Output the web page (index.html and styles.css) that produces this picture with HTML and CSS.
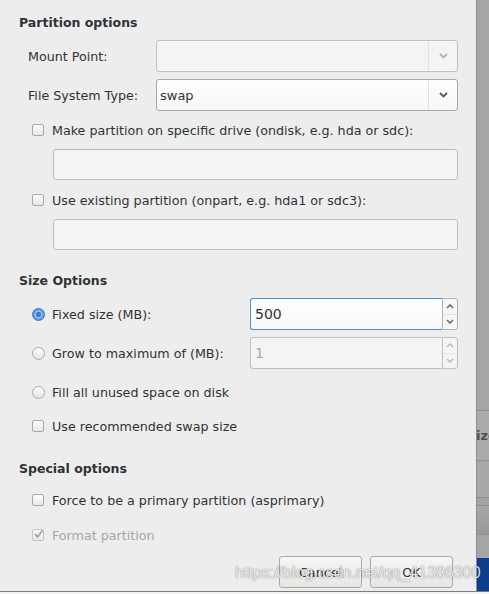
FILE: index.html
```html
<!DOCTYPE html>
<html>
<head>
<meta charset="utf-8">
<link rel="stylesheet" href="styles.css">
</head>
<body>
<div class="screen">
  <div class="main">
    <div class="dialog">
      <div class="heading h1">Partition options</div>

      <div class="form-row r-mount">
        <span class="label">Mount Point:</span>
        <div class="combo insensitive">
          <span class="combo-text"></span>
          <span class="combo-btn"><svg width="9" height="6" viewBox="0 0 9 6"><polyline points="1,1 4.5,4.5 8,1" fill="none" stroke="#b3b3b3" stroke-width="1.8"/></svg></span>
        </div>
      </div>

      <div class="form-row r-fs">
        <span class="label">File System Type:</span>
        <div class="combo active">
          <span class="combo-text">swap</span>
          <span class="combo-btn"><svg width="9" height="6" viewBox="0 0 9 6"><polyline points="1,1 4.5,4.5 8,1" fill="none" stroke="#555753" stroke-width="1.8"/></svg></span>
        </div>
      </div>

      <div class="check-row r-c1"><span class="check"></span><span>Make partition on specific drive (ondisk, e.g. hda or sdc):</span></div>
      <div class="entry r-e1"></div>

      <div class="check-row r-c2"><span class="check"></span><span>Use existing partition (onpart, e.g. hda1 or sdc3):</span></div>
      <div class="entry r-e2"></div>

      <div class="heading h2">Size Options</div>

      <div class="spin-row r-fixed">
        <div class="opt"><span class="radio on"></span><span>Fixed size (MB):</span></div>
        <div class="spin focus">
          <span class="spin-entry">500</span>
          <span class="spin-btns">
            <span class="sb"><svg width="8" height="5" viewBox="0 0 8 5"><polyline points="1,4 4,1 7,4" fill="none" stroke="#6a6a6a" stroke-width="1.6"/></svg></span>
            <span class="sb"><svg width="8" height="5" viewBox="0 0 8 5"><polyline points="1,1 4,4 7,1" fill="none" stroke="#6a6a6a" stroke-width="1.6"/></svg></span>
          </span>
        </div>
      </div>

      <div class="spin-row r-grow">
        <div class="opt"><span class="radio"></span><span>Grow to maximum of (MB):</span></div>
        <div class="spin disabled">
          <span class="spin-entry">1</span>
          <span class="spin-btns">
            <span class="sb"><svg width="8" height="5" viewBox="0 0 8 5"><polyline points="1,4 4,1 7,4" fill="none" stroke="#bdbdbd" stroke-width="1.6"/></svg></span>
            <span class="sb"><svg width="8" height="5" viewBox="0 0 8 5"><polyline points="1,1 4,4 7,1" fill="none" stroke="#bdbdbd" stroke-width="1.6"/></svg></span>
          </span>
        </div>
      </div>

      <div class="check-row r-fill"><span class="radio"></span><span>Fill all unused space on disk</span></div>
      <div class="check-row r-rec"><span class="check"></span><span>Use recommended swap size</span></div>

      <div class="heading h3">Special options</div>

      <div class="check-row r-force"><span class="check"></span><span>Force to be a primary partition (asprimary)</span></div>
      <div class="check-row r-format dis"><span class="check checked"><svg width="11" height="10" viewBox="0 0 11 10"><polyline points="2,5 4.5,8 9.5,1.5" fill="none" stroke="#a8a8a8" stroke-width="2"/></svg></span><span>Format partition</span></div>

      <div class="buttons">
        <div class="btn">Cancel</div>
        <div class="btn">OK</div>
      </div>
    </div>
    <div class="strip">
      <div class="s-top"></div>
      <div class="s-tab"><span>ize</span></div>
      <div class="s-a"></div>
      <div class="s-b"></div>
      <div class="s-c"></div>
      <div class="s-d"></div>
      <div class="s-blue"></div>
    </div>
  </div>
  <div class="bottom-line"></div>
  <div class="bottom-fill"></div>
  <div class="watermark">https://blog.csdn.net/qq_41386300</div>
</div>
</body>
</html>
```

FILE: styles.css
```css
html, body {
  margin: 0;
  padding: 0;
}
body {
  font-family: "DejaVu Sans", "Noto Sans", sans-serif;
  font-size: 12.7px;
  color: #2e3436;
  background: #ededed;
}
.screen {
  position: relative;
  width: 489px;
  height: 594px;
  overflow: hidden;
}
.main {
  display: flex;
  height: 591px;
}
.dialog {
  box-sizing: border-box;
  width: 477px;
  height: 591px;
  background: #ededed;
  border-right: 1px solid #8c8c8c;
  padding-top: 15px;
  display: flex;
  flex-direction: column;
}
.heading {
  margin-left: 19px;
  font-weight: bold;
  font-size: 12.5px;
  height: 16px;
  line-height: 16px;
}
.form-row {
  display: flex;
  align-items: center;
  margin-left: 28px;
  height: 32px;
}
.label {
  width: 128px;
}
.combo {
  box-sizing: border-box;
  width: 302px;
  height: 32px;
  border: 1px solid #b4b4b1;
  border-radius: 3px;
  display: flex;
  align-items: stretch;
}
.combo.insensitive {
  background: #f4f4f2;
  border-color: #c0c0bd;
}
.combo.active {
  background: linear-gradient(#ffffff, #f6f6f5);
  border-color: #a8a8a5;
}
.combo-text {
  flex: 1;
  padding-left: 3px;
  display: flex;
  align-items: center;
  font-size: 13px;
}
.combo-btn {
  width: 28px;
  border-left: 1px solid #e2e2e0;
  display: flex;
  align-items: center;
  justify-content: center;
}
.check-row {
  display: flex;
  align-items: center;
  margin-left: 32px;
  height: 16px;
  gap: 8px;
}
.check-row.dis {
  color: #a5a7a7;
}
.check {
  box-sizing: border-box;
  width: 12px;
  height: 12px;
  border: 1px solid #a9a9a9;
  border-radius: 2px;
  background: linear-gradient(#ffffff, #e6e6e6);
  position: relative;
  flex: none;
}
.check.checked {
  border-color: #c2c2c2;
  background: linear-gradient(#f8f8f8, #ececec);
}
.check.checked svg {
  position: absolute;
  left: 0;
  top: -1px;
}
.radio {
  box-sizing: border-box;
  width: 13px;
  height: 13px;
  border: 1px solid #a9a9a9;
  border-radius: 50%;
  background: linear-gradient(#ffffff, #e4e4e4);
  flex: none;
}
.radio.on {
  border-color: #3d75b5;
  background: radial-gradient(circle at 50% 50%, #3a7fd0 0, #3a7fd0 2.5px, #9cc3f0 3px, #6ea3e4 4.5px, #4a88d6 6px);
}
.entry {
  box-sizing: border-box;
  margin-left: 53px;
  width: 405px;
  height: 31px;
  border: 1px solid #bfbfbc;
  border-radius: 3px;
  background: #f4f4f2;
}
.spin-row {
  display: flex;
  align-items: center;
  margin-left: 32px;
  height: 32px;
}
.opt {
  width: 218px;
  display: flex;
  align-items: center;
  gap: 7px;
}
.spin {
  display: flex;
  width: 208px;
  height: 32px;
  box-sizing: border-box;
}
.spin-entry {
  box-sizing: border-box;
  flex: 1;
  height: 32px;
  border: 1px solid #4a90d9;
  border-right: none;
  border-radius: 3px 0 0 3px;
  padding-left: 4px;
  display: flex;
  align-items: center;
  font-size: 14px;
  background: linear-gradient(#ffffff, #f7f7f7);
}
.spin-btns {
  box-sizing: border-box;
  width: 16px;
  height: 32px;
  border: 1px solid #b4b4b1;
  border-radius: 0 3px 3px 0;
  display: flex;
  flex-direction: column;
  background: #f6f6f5;
}
.sb {
  flex: 1;
  display: flex;
  align-items: center;
  justify-content: center;
}
.sb + .sb {
  border-top: 1px solid #e4e4e2;
}
.spin.disabled .spin-entry {
  border-color: #c0c0bd;
  background: #f4f4f2;
  color: #a7a9a9;
}
.spin.disabled .spin-btns {
  border-color: #c0c0bd;
  background: #f4f4f2;
}
.r-mount { margin-top: 9px; }
.r-fs { margin-top: 7px; }
.r-c1 { margin-top: 11px; }
.r-e1 { margin-top: 11px; }
.r-c2 { margin-top: 12px; }
.r-e2 { margin-top: 11px; }
.h2 { margin-top: 23px; }
.r-fixed { margin-top: 9px; }
.r-grow { margin-top: 7px; }
.r-fill { margin-top: 15px; gap: 7px; }
.r-rec { margin-top: 18px; }
.h3 { margin-top: 27px; }
.r-force { margin-top: 15px; }
.r-format { margin-top: 19px; }
.buttons {
  margin-top: 13px;
  margin-left: 279px;
  display: flex;
  gap: 8px;
}
.btn {
  box-sizing: border-box;
  width: 83px;
  height: 32px;
  border: 1px solid #a8a8a5;
  border-radius: 3px;
  background: linear-gradient(#f6f6f5, #e6e6e4);
  display: flex;
  align-items: center;
  justify-content: center;
}
.strip {
  width: 12px;
  height: 591px;
  display: flex;
  flex-direction: column;
  background: #a6a6a6;
}
.s-top {
  height: 410px;
  background: #a6a6a6;
}
.s-tab {
  height: 49px;
  border-top: 1px solid #909090;
  background: #ababab;
  overflow: hidden;
  display: flex;
  align-items: center;
  font-size: 13px;
  font-weight: bold;
  color: #505050;
}
.s-tab span {
  margin-left: -1px;
}
.s-a {
  height: 36px;
  border-top: 1px solid #909090;
  background: #a8a8a8;
}
.s-b {
  height: 7px;
  border-top: 1px solid #8e8e8e;
  background: #a4a4a4;
}
.s-c {
  height: 28px;
  border-top: 1px solid #8e8e8e;
  background: linear-gradient(#a8a8a8, #989898);
}
.s-d {
  height: 23px;
  border-top: 1px solid #8e8e8e;
  background: #a6a6a6;
}
.s-blue {
  flex: 1;
  background: #0b3f8e;
}
.bottom-line {
  height: 1px;
  background: #7c7c7c;
}
.bottom-fill {
  height: 2px;
  background: #f2f2f2;
}
.watermark {
  position: absolute;
  left: 235px;
  top: 564px;
  font-family: "Liberation Sans", Arial, sans-serif;
  font-size: 16px;
  line-height: 18px;
  color: rgba(255, 255, 255, 0.85);
  text-shadow: 0 0 1px rgba(0, 0, 0, 0.45), 0 0 2px rgba(0, 0, 0, 0.2);
  white-space: nowrap;
}
```
